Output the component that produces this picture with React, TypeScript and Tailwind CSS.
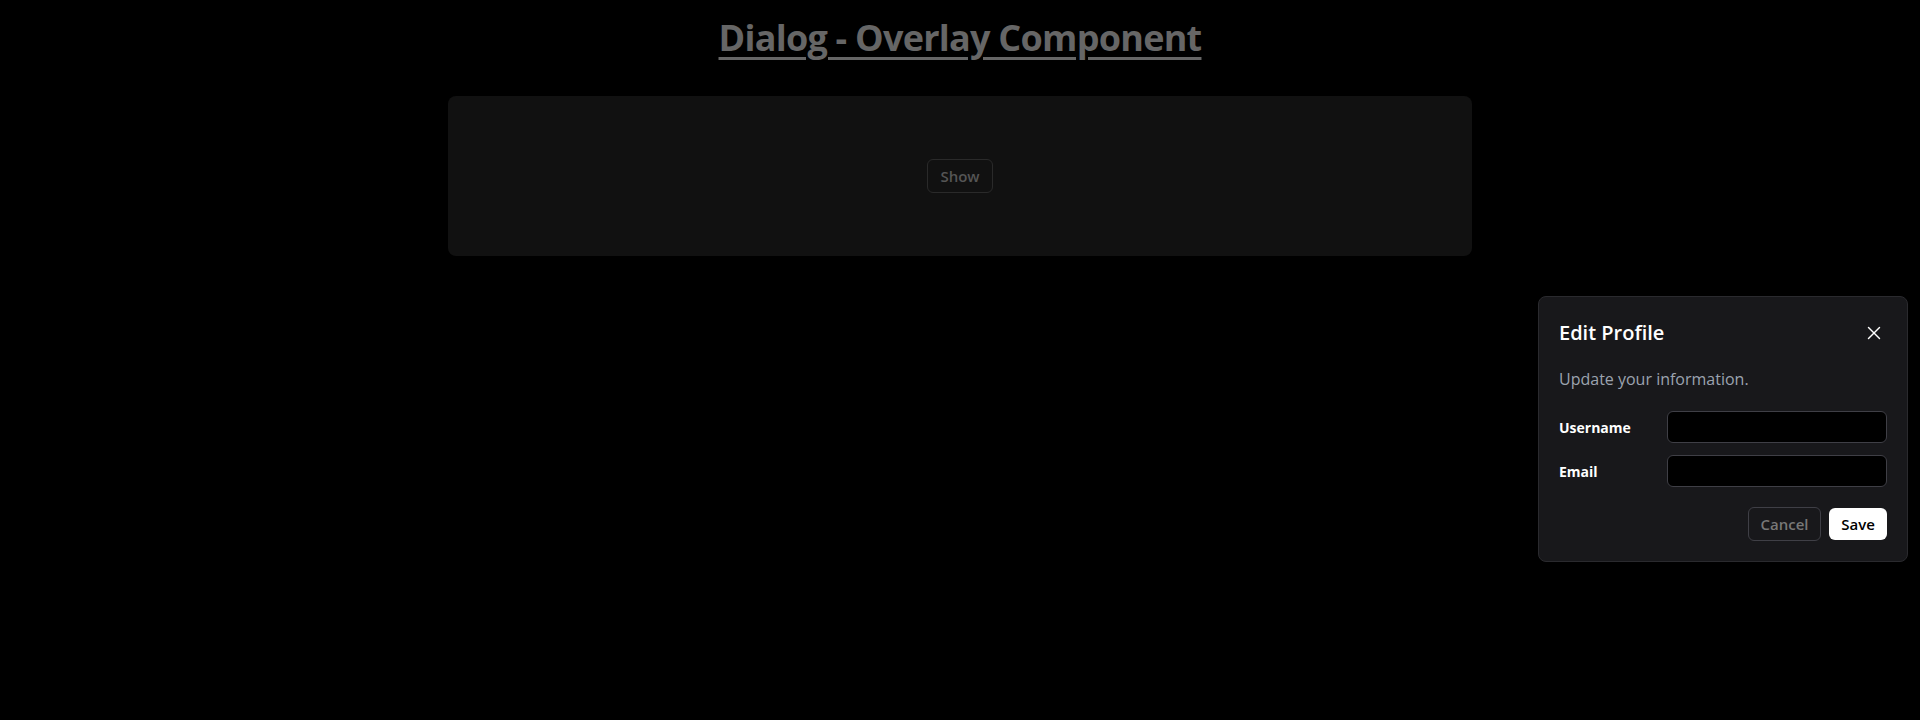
import React from "react";
import { X } from "lucide-react";

export default function App() {
  return (
    <div
      className="relative min-h-[720px] w-full bg-black"
      style={{ fontFamily: '"Open Sans", "Noto Sans", sans-serif' }}
    >
      <div className="flex flex-col items-center pt-[18px]">
        <h1 className="text-[36px] leading-[40px] font-bold tracking-[-0.75px] text-[#666666] underline underline-offset-[6px] decoration-[3px]">
          Dialog - Overlay Component
        </h1>
        <div className="mt-[38px] flex h-[160px] w-[1024px] items-center justify-center rounded-lg bg-[#111111]">
          <button className="h-[34px] w-[66px] rounded-md border border-[#2a2a2a] bg-[#111111] text-[15px] font-semibold text-[#555555]">
            Show
          </button>
        </div>
      </div>

      <div className="absolute right-[12px] top-[296px] w-[370px] rounded-lg border border-[#2a2a2e] bg-[#18181b] p-5">
        <div className="mt-[2px] flex h-[28px] items-center justify-between">
          <h2 className="text-[20px] leading-[28px] font-semibold text-white">Edit Profile</h2>
          <button className="mr-[2px] text-white">
            <X size={22} strokeWidth={1.6} />
          </button>
        </div>
        <p className="mt-[20px] text-[16px] leading-6 text-[#9ca3af]">Update your information.</p>
        <div className="mt-5 flex flex-col gap-3">
          <div className="flex items-center gap-3">
            <label className="w-[96px] text-[14px] font-bold text-white">Username</label>
            <input className="h-[32px] w-[220px] rounded-md border border-[#3f3f46] bg-black px-2 text-sm text-white outline-none" />
          </div>
          <div className="flex items-center gap-3">
            <label className="w-[96px] text-[14px] font-bold text-white">Email</label>
            <input className="h-[32px] w-[220px] rounded-md border border-[#3f3f46] bg-black px-2 text-sm text-white outline-none" />
          </div>
        </div>
        <div className="mt-5 flex items-center justify-end gap-2">
          <button className="h-[34px] w-[73px] rounded-md border border-[#3f3f46] bg-transparent text-[15px] font-semibold text-[#777777]">
            Cancel
          </button>
          <button className="h-[32px] w-[58px] rounded-md bg-white text-[15px] font-semibold text-black">
            Save
          </button>
        </div>
      </div>
    </div>
  );
}
